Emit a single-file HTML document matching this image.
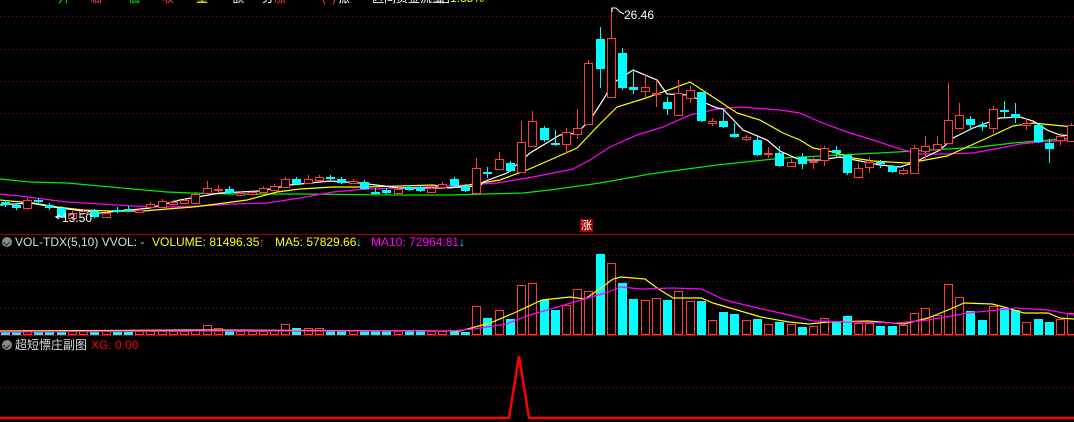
<!DOCTYPE html>
<html><head><meta charset="utf-8">
<style>
html,body{margin:0;padding:0;background:#000;width:1074px;height:422px;overflow:hidden;position:relative;font-family:"Liberation Sans","Noto Sans CJK SC",sans-serif;}
svg{position:absolute;left:0;top:0;}
.t{position:absolute;font-size:12px;white-space:nowrap;line-height:14px;}
.ic{position:absolute;width:10px;height:10px;border-radius:50%;background:#8a8a8a;}
.ic:after{content:"";position:absolute;left:2px;top:3px;width:4px;height:4px;border-right:1.5px solid #222;border-bottom:1.5px solid #222;transform:rotate(45deg);}
</style></head><body>
<svg id="s" width="1074" height="422" xmlns="http://www.w3.org/2000/svg"></svg>

<div class="t" style="top:-9px;left:44px;color:#fff">一</div>
<div class="t" style="top:-9px;left:58px;color:#0f0">开</div>
<div class="t" style="top:-9px;left:90px;color:#f33">临</div>
<div class="t" style="top:-9px;left:128px;color:#0f0">低</div>
<div class="t" style="top:-9px;left:162px;color:#f33">收</div>
<div class="t" style="top:-9px;left:196px;color:#ff0">量</div>
<div class="t" style="top:-9px;left:232px;color:#fff">额</div>
<div class="t" style="top:-9px;left:262px;color:#fff">分</div>
<div class="t" style="top:-9px;left:274px;color:#f33">涨</div>
<div class="t" style="top:-9px;left:322px;color:#f33">(</div>
<div class="t" style="top:-9px;left:332px;color:#f33">)</div>
<div class="t" style="top:-9px;left:338px;color:#fff">振</div>
<div class="t" style="top:-9px;left:372px;color:#fff">区间资金流量</div>
<div class="t" style="top:-9px;left:438px;color:#fff">估</div>
<div class="t" style="top:-9px;left:450px;color:#ff0">1.35%</div>

<div class="t" style="top:8px;left:624px;color:#fff;font-size:12px">26.46</div>
<div class="t" style="top:211px;left:62px;color:#fff;font-size:12px">13.50</div>

<div style="position:absolute;left:580px;top:219px;width:13px;height:13px;background:#a00000;color:#fff;font-size:11px;line-height:13px;text-align:center;font-family:'Noto Sans CJK SC',sans-serif">涨</div>

<div class="ic" style="left:2px;top:237px"></div>
<div class="t" style="top:235px;left:15px;color:#ddd">VOL-TDX(5,10)&nbsp;VVOL: -</div>
<div class="t" style="top:235px;left:152px;color:#ff0">VOLUME: 81496.35</div>
<div class="t" style="top:235px;left:259px;color:#f33">↑</div>
<div class="t" style="top:235px;left:275px;color:#ff0">MA5: 57829.66</div>
<div class="t" style="top:235px;left:356px;color:#0ff">↓</div>
<div class="t" style="top:235px;left:371px;color:#f0f">MA10: 72964.81</div>
<div class="t" style="top:235px;left:459px;color:#0ff">↓</div>

<div class="ic" style="left:2px;top:340px"></div>
<div class="t" style="top:338px;left:15px;color:#ddd;font-family:'Noto Sans CJK SC',sans-serif">超短慓庄副图</div>
<div class="t" style="top:338px;left:91px;color:#f00">XG: 0.00</div>

<script>
var s=document.getElementById('s');var NS='http://www.w3.org/2000/svg';
function el(n,a){var e=document.createElementNS(NS,n);for(var k in a)e.setAttribute(k,a[k]);s.appendChild(e);return e;}
[16,49,81,113,145,178,210,255,281,308,387].forEach(function(y){el('line',{x1:0,x2:1074,y1:y+.5,y2:y+.5,stroke:'#900','stroke-dasharray':'1,3','shape-rendering':'crispEdges'});});
el('line',{x1:0,x2:1074,y1:234.5,y2:234.5,stroke:'#a00000','shape-rendering':'crispEdges'});
el('line',{x1:0,x2:1074,y1:335.5,y2:335.5,stroke:'#a00000','shape-rendering':'crispEdges'});
var C=[[202,205,200,207,'c'],[205,208,203,210,'c'],[200,208,198,210,'r'],[200,202,198,204,'c'],[205,208,203,210,'c'],[208,217,206,218,'c'],[213,218,211,220,'r'],[211,213,209,214,'r'],[211,217,209,218,'c'],[213,217,211,218,'r'],
[210,211,207,213,'c'],[209,210,206,212,'c'],[210,212,208,213,'r'],[204,207,202,208,'r'],[201,207,199,208,'r'],[202,204,200,205,'r'],[200,203,198,204,'r'],[194,203,192,204,'r'],[188,193,181,194,'r'],[189,190,185,193,'r'],
[189,193,186,194,'c'],[193,195,191,196,'r'],[192,194,190,195,'r'],[188,192,186,193,'r'],[186,190,184,191,'r'],[179,187,177,188,'r'],[179,184,177,185,'c'],[179,183,175,184,'r'],[177,180,175,181,'r'],[177,179,175,180,'c'],
[179,183,177,184,'c'],[181,183,179,184,'r'],[182,189,180,190,'c'],[192,193,188,194,'c'],[190,193,188,194,'c'],[189,193,187,194,'r'],[187,190,185,191,'c'],[187,191,185,192,'c'],[188,192,186,193,'r'],[184,187,182,188,'r'],
[179,186,177,187,'c'],[186,191,184,192,'c'],[168,193,158,194,'r'],[172,173,167,178,'c'],[159,169,152,170,'r'],[163,171,161,172,'c'],[142,172,121,173,'r'],[121,146,111,147,'r'],[128,140,126,142,'c'],[143,144,130,146,'c'],
[132,144,128,153,'r'],[128,134,109,139,'r'],[63,124,60,125,'r'],[39,69,27,88,'c'],[38,97,8,98,'r'],[53,88,48,90,'c'],[87,90,69,94,'c'],[87,91,74,97,'r'],[93,94,80,107,'r'],[102,109,97,115,'c'],
[93,115,80,116,'r'],[90,98,86,103,'r'],[92,121,92,122,'c'],[121,123,118,126,'r'],[121,127,110,128,'c'],[134,137,123,138,'c'],[137,139,135,141,'r'],[140,155,135,156,'c'],[153,154,147,158,'r'],[153,166,146,167,'c'],
[162,166,159,167,'r'],[157,164,153,169,'c'],[161,162,157,169,'r'],[148,160,146,166,'r'],[150,153,146,157,'c'],[155,173,155,175,'c'],[168,177,163,178,'r'],[162,167,157,173,'r'],[162,163,160,168,'c'],[166,172,165,173,'c'],
[170,173,168,175,'r'],[148,173,145,174,'r'],[146,151,136,160,'r'],[144,149,136,150,'r'],[120,143,83,144,'r'],[115,128,103,129,'r'],[119,125,116,130,'c'],[125,126,122,131,'c'],[109,128,106,133,'r'],[110,111,101,117,'c'],
[114,118,103,123,'c'],[123,125,118,130,'r'],[125,142,124,143,'c'],[143,149,139,163,'c'],[136,140,133,145,'r'],[125,141,123,142,'r']];
var V=[331,331,330,331,331,331,331,331,331,331,331,331,331,331,331,331,331,330,325,328,331,331,331,331,330,324,328,328,328,331,
330,330,331,331,331,331,330,330,331,331,330,332,306,318,310,319,285,283,300,310,305,289,291,254,263,283,299,300,298,300,
291,301,301,320,312,314,320,319,324,322,324,327,326,318,322,316,323,323,326,326,325,313,308,315,284,297,311,320,306,308,310,322,319,322,319,313];
var RED='#ff3c3c',CY='#00ffff',CE={'shape-rendering':'crispEdges'};
function X(i){return Math.round(4.5+11.23*i);}
function line(pts,col,w){el('polyline',{points:pts.map(function(p){return p[0]+','+p[1]}).join(' '),fill:'none',stroke:col,'stroke-width':w||1.2});}
function R(x,y,w,h,f){el('rect',{x:x,y:y,width:w,height:Math.max(1,h),fill:f,'shape-rendering':'crispEdges'});}
function HR(x,y,w,h,col){R(x,y,w,1,col);R(x,y+h-1,w,1,col);R(x,y,1,h,col);R(x+w-1,y,1,h,col);}
line([[0,179],[30,182],[67,183],[100,186],[133,189],[167,192],[190,193],[233,194],[300,194],[400,195],[450,195],[523,193],[550,190],[600,183],[650,174],[717,165],[783,158],[840,155],[897,152],[947,149],[980,147],[1013,143],[1074,138]],'#00ee00');
line([[0,194],[20,196],[43,199],[67,202],[100,204],[133,206],[167,207],[200,206],[233,204],[267,203],[300,198],[333,192],[367,189],[400,188],[450,186],[497,183],[533,177],[573,169],[590,160],[610,147],[637,135],[663,127],[690,115],[717,109],[740,107],[780,110],[800,113],[820,122],[847,132],[873,140],[900,149],[920,154],[947,154],[973,153],[1000,148],[1020,144],[1040,142],[1074,140]],'#ff00ff');
line([[0,200],[10,201],[33,203],[57,207],[83,210],[110,211],[143,211],[167,209],[193,207],[217,204],[247,200],[277,192],[300,189],[333,187],[367,187],[400,186],[433,185],[450,188],[500,180],[527,170],[550,160],[577,148],[597,127],[617,107],[643,99],[663,92],[690,82],[713,97],[737,113],[760,120],[783,133],[800,140],[813,148],[833,152],[853,158],[873,161],[907,163],[920,161],[947,156],[967,147],[987,138],[1013,126],[1033,123],[1053,125],[1074,127]],'#ffff00');
line([[0,205],[30,203],[60,208],[100,213],[150,208],[180,200],[220,193],[260,191],[290,185],[330,181],[360,183],[400,188],[440,188],[480,186],[483,182],[507,173],[530,153],[560,135],[577,133],[590,120],[603,100],[613,83],[633,70],[657,80],[667,94],[690,95],[703,102],[717,108],[723,109],[743,130],[767,140],[780,151],[800,160],[820,160],[840,157],[860,161],[880,165],[900,167],[913,163],[940,150],[953,138],[973,128],[1000,118],[1020,117],[1033,121],[1047,130],[1060,135],[1074,136]],'#ffffff');
C.forEach(function(c,i){var x=X(i),col=c[4]=='r'?RED:CY;
 R(x,c[2],1,c[3]-c[2],col);
 if(c[1]-c[0]<=1){R(x-4,c[0],9,2,col);}
 else if(c[4]=='r'){R(x-4,c[0],9,c[1]-c[0],'#000');HR(x-4,c[0],9,c[1]-c[0]+1,col);}
 else R(x-4,c[0],9,c[1]-c[0],col);
 var v=V[i];
 if(c[4]=='r')HR(x-4,v,9,335-v,col);
 else R(x-4,v,9,335-v,col);
});
line([[0,331],[200,330],[460,331],[490,323],[514,313],[542,300],[570,297],[585,299],[601,288],[613,279],[621,277],[645,279],[657,288],[673,298],[701,298],[713,303],[737,310],[761,317],[789,322],[809,324],[828,322],[868,321],[904,324],[928,318],[948,310],[964,303],[992,304],[1004,307],[1024,313],[1048,313],[1060,318],[1074,319]],'#ffff00');
line([[0,332],[200,331],[450,331],[474,329],[506,324],[530,315],[554,308],[581,300],[605,293],[621,287],[641,289],[673,288],[701,289],[725,300],[753,307],[789,315],[813,321],[848,322],[896,323],[928,320],[968,313],[1016,308],[1048,310],[1074,315]],'#ff00ff');
el('polyline',{points:'612,12 612,8 616,8 620,12 624,14',fill:'none',stroke:'#fff'});
el('polyline',{points:'59,215 56,217 59,219 56,217 66,217',fill:'none',stroke:'#fff'});
el('polyline',{points:'0,418 509,418 519,356 529,418 1074,418',fill:'none',stroke:'#ff0000','stroke-width':2.5});
</script>
</body></html>
